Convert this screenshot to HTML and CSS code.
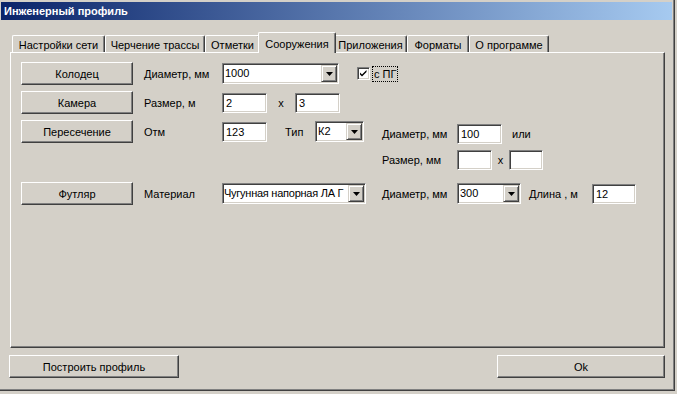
FILE: index.html
```html
<!DOCTYPE html>
<html lang="ru">
<head>
<meta charset="utf-8">
<title>Инженерный профиль</title>
<link rel="stylesheet" href="styles.css">
</head>
<body>
<div class="window">
  <div class="titlebar">Инженерный профиль</div>
  <div class="tabs">
    <div class="tab w93">Настройки сети</div>
    <div class="tab w100">Черчение трассы</div>
    <div class="tab w55">Отметки</div>
    <div class="tab active w78">Сооружения</div>
    <div class="tab w73">Приложения</div>
    <div class="tab w62">Форматы</div>
    <div class="tab w80">О программе</div>
  </div>
  <div class="panel">
    <div class="row">
      <div class="btn w112">Колодец</div>
      <div class="lbl">Диаметр, мм</div>
      <div class="combo w117"><div class="val">1000</div><div class="arrow"><svg width="7" height="4" viewBox="0 0 7 4"><path d="M0 0H7L3.5 4Z" fill="#000"/></svg></div></div>
      <div class="check"><svg width="11" height="11" viewBox="0 0 11 11"><path d="M2 4.5L4 6.5L8.5 2V4L4 8.5L2 6.5Z" fill="#000"/></svg></div>
      <div class="focus">с ПГ</div>
    </div>
    <div class="row">
      <div class="btn w112">Камера</div>
      <div class="lbl">Размер, м</div>
      <div class="field w45">2</div>
      <div class="times w28">x</div>
      <div class="field w45">3</div>
    </div>
    <div class="row">
      <div class="btn w112">Пересечение</div>
      <div class="lbl">Отм</div>
      <div class="field w45">123</div>
      <div class="tip">Тип</div>
      <div class="combo w49"><div class="val">К2</div><div class="arrow"><svg width="7" height="4" viewBox="0 0 7 4"><path d="M0 0H7L3.5 4Z" fill="#000"/></svg></div></div>
      <div class="lbl2 low">Диаметр, мм</div>
      <div class="field w45 low">100</div>
      <div class="ili low">или</div>
    </div>
    <div class="row row4">
      <div class="lbl3">Размер, мм</div>
      <div class="field w35"></div>
      <div class="times w17">x</div>
      <div class="field w34"></div>
    </div>
    <div class="row row5">
      <div class="btn w112">Футляр</div>
      <div class="lbl">Материал</div>
      <div class="combo w144"><div class="val tight">Чугунная напорная ЛА Г</div><div class="arrow"><svg width="7" height="4" viewBox="0 0 7 4"><path d="M0 0H7L3.5 4Z" fill="#000"/></svg></div></div>
      <div class="lbl2 ml16">Диаметр, мм</div>
      <div class="combo w64"><div class="val">300</div><div class="arrow"><svg width="7" height="4" viewBox="0 0 7 4"><path d="M0 0H7L3.5 4Z" fill="#000"/></svg></div></div>
      <div class="lbl4">Длина , м</div>
      <div class="field w44">12</div>
    </div>
  </div>
  <div class="footer">
    <div class="btn w170">Построить профиль</div>
    <div class="btn w168">Ok</div>
  </div>
</div>
</body>
</html>
```
FILE: styles.css
```css
* { box-sizing: border-box; }
body {
  margin: 0;
  background: #d4d0c8;
  font-family: "Liberation Sans", Arial, sans-serif;
  font-size: 11px;
  color: #000;
}
.window {
  width: 675px;
  height: 391px;
  padding-top: 2px;
  border-right: 1px solid #404040;
  border-bottom: 1px solid #404040;
  box-shadow: inset -1px -1px 0 #808080;
}
.titlebar {
  height: 18px;
  margin: 0 2px 0 1px;
  padding-left: 3px;
  line-height: 18px;
  color: #fff;
  font-weight: bold;
  background: linear-gradient(to right, #0a246a, #a6caf0);
}
.tabs {
  display: flex;
  align-items: flex-end;
  height: 32px;
  padding-left: 12px;
}
.tab {
  height: 17px;
  padding-top: 2px;
  line-height: 14px;
  text-align: center;
  white-space: nowrap;
  border-left: 1px solid #fff;
  border-top: 1px solid #fff;
  border-right: 1px solid #404040;
  border-radius: 2px 2px 0 0;
  box-shadow: inset -1px 0 0 #808080;
}
.tab.active {
  height: 21px;
  padding-top: 4px;
  margin: 0 -2px -1px;
  position: relative;
  z-index: 1;
  background: #d4d0c8;
}
.w93 { width: 93px; }
.w100 { width: 100px; }
.w55 { width: 55px; }
.w78 { width: 78px; }
.w73 { width: 73px; }
.w62 { width: 62px; }
.w80 { width: 80px; }
.panel {
  width: 655px;
  height: 296px;
  margin-left: 10px;
  padding: 9px 0 0 10px;
  border: 1px solid;
  border-color: #fff #404040 #404040 #fff;
  box-shadow: inset -1px -1px 0 #808080;
}
.row {
  display: flex;
  align-items: center;
  height: 23px;
  margin-bottom: 6px;
  white-space: nowrap;
}
.row4 { height: 20px; margin-top: 7px; margin-bottom: 12px; padding-left: 361px; }
.btn {
  height: 23px;
  display: flex;
  align-items: center;
  justify-content: center;
  background: #d4d0c8;
  border: 1px solid;
  border-color: #fff #404040 #404040 #fff;
  box-shadow: inset -1px -1px 0 #808080;
}
.w112 { width: 112px; }
.w170 { width: 170px; }
.w168 { width: 168px; }
.lbl { width: 78px; margin-left: 11px; }
.lbl2 { width: 75px; margin-left: 18px; }
.lbl3 { width: 75px; }
.lbl4 { width: 63px; margin-left: 8px; }
.ml16 { margin-left: 16px; }
.tip { width: 48px; padding-left: 18px; }
.ili { margin-left: 10px; }
.low { margin-top: 4px; }
.field {
  height: 20px;
  padding-left: 3px;
  line-height: 18px;
  background: #fff;
  border: 1px solid;
  border-color: #808080 #fff #fff #808080;
  box-shadow: inset 1px 1px 0 #404040, inset -1px -1px 0 #d4d0c8;
}
.w45 { width: 45px; }
.w35 { width: 35px; }
.w34 { width: 34px; }
.w44 { width: 44px; }
.times { text-align: center; }
.w28 { width: 28px; }
.w17 { width: 17px; }
.combo {
  display: flex;
  height: 21px;
  background: #fff;
  border: 1px solid;
  border-color: #808080 #fff #fff #808080;
  box-shadow: inset 1px 1px 0 #404040, inset -1px -1px 0 #d4d0c8;
}
.w117 { width: 117px; }
.w49 { width: 49px; }
.w144 { width: 144px; }
.w64 { width: 64px; }
.combo .val {
  flex: 1;
  min-width: 0;
  padding-left: 2px;
  line-height: 19px;
  overflow: hidden;
}
.combo .val.tight {
  padding-left: 1px;
  letter-spacing: -0.25px;
}
.combo .arrow {
  width: 16px;
  flex: none;
  margin: 1px 1px 1px 0;
  display: flex;
  align-items: center;
  justify-content: center;
  background: #d4d0c8;
  border: 1px solid;
  border-color: #d4d0c8 #404040 #404040 #d4d0c8;
  box-shadow: inset 1px 1px 0 #fff, inset -1px -1px 0 #808080;
}
.check {
  width: 13px;
  height: 13px;
  margin-left: 18px;
  background: #fff;
  border: 1px solid;
  border-color: #808080 #fff #fff #808080;
  box-shadow: inset 1px 1px 0 #404040, inset -1px -1px 0 #d4d0c8;
  display: flex;
}
.focus {
  margin-left: 3px;
  padding: 0 1px;
  line-height: 14px;
  outline: 1px dotted #000;
}
.footer {
  display: flex;
  justify-content: space-between;
  width: 656px;
  margin: 7px 0 0 9px;
}
```
